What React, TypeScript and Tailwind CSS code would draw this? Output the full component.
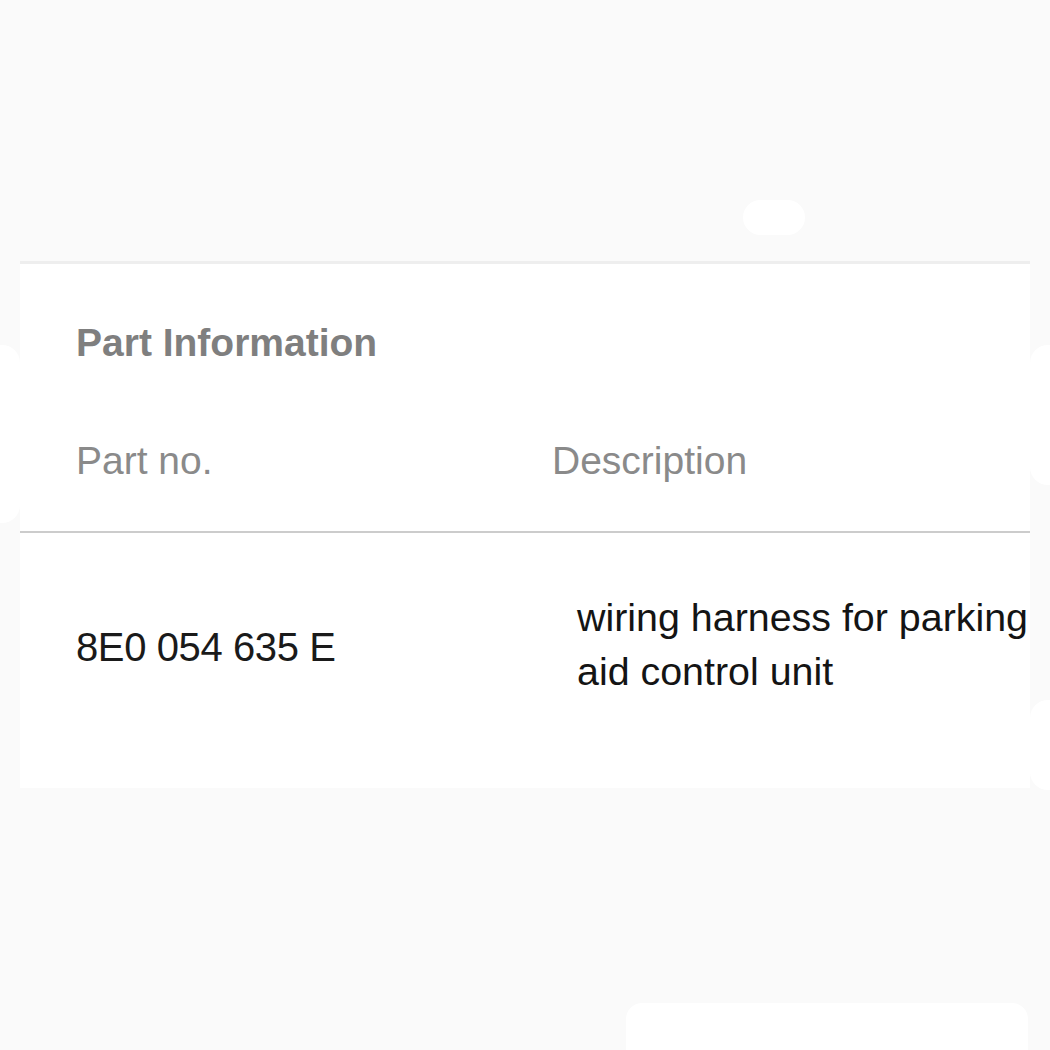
import React from "react";

export default function App() {
  return (
    <div
      className="relative w-[1050px] h-[1050px] overflow-hidden bg-[#fafafa]"
      style={{ fontFamily: '"Liberation Sans", Arial, sans-serif' }}
    >
      {/* background decorations peeking from behind */}
      <div className="absolute left-[-20px] top-[345px] w-[40px] h-[178px] rounded-[18px] bg-white" />
      <div className="absolute left-[1030px] top-[345px] w-[60px] h-[140px] rounded-[18px] bg-white" />
      <div className="absolute left-[1030px] top-[700px] w-[60px] h-[90px] rounded-[18px] bg-white" />
      <div className="absolute left-[626px] top-[1003px] w-[402px] h-[80px] rounded-[16px] bg-white" />

      <div className="relative">
        <div className="h-[200px]" />
        <div className="flex">
          <div className="ml-[743px] w-[62px] h-[35px] rounded-full bg-white" />
        </div>
        <div className="h-[26px]" />
        <div className="mx-[20px] h-[527px] bg-white border-t-[3px] border-[#eeeeee]">
          <div className="pl-[56px] pt-[57px] text-[39px] leading-[44px] font-bold text-[#7f7f7f]">
            Part Information
          </div>
          <div className="mt-[74px] grid grid-cols-[476px_1fr] pl-[56px] pb-[48px] border-b-2 border-[#cccccc] text-[39px] leading-[44px] text-[#8a8a8a]">
            <div>Part no.</div>
            <div>Description</div>
          </div>
          <div className="grid grid-cols-[476px_1fr] pl-[56px] pt-[57px]">
            <div className="mt-[34px] text-[40px] leading-[46px] tracking-[-0.4px] text-[#1a1a1a]">
              8E0 054 635 E
            </div>
            <div className="pl-[25px] text-[39.4px] leading-[54px] text-[#141414]">
              wiring harness for parking
              <br />
              aid control unit
            </div>
          </div>
        </div>
      </div>
    </div>
  );
}
